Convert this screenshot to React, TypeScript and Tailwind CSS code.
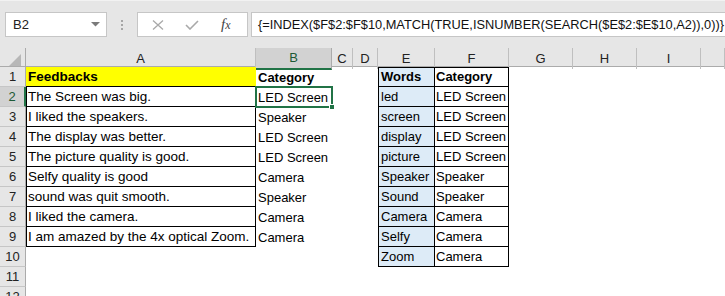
import React from "react";

const COLS = [
  { key: "A", w: 230 },
  { key: "B", w: 76 },
  { key: "C", w: 21 },
  { key: "D", w: 25 },
  { key: "E", w: 57 },
  { key: "F", w: 74 },
  { key: "G", w: 64 },
  { key: "H", w: 64 },
  { key: "I", w: 64 },
  { key: "J", w: 24 },
];

const feedbacks = [
  "The Screen was big.",
  "I liked the speakers.",
  "The display was better.",
  "The picture quality is good.",
  "Selfy quality is good",
  "sound was quit smooth.",
  "I liked the camera.",
  "I am amazed by the 4x optical Zoom.",
];
const results = ["LED Screen", "Speaker", "LED Screen", "LED Screen", "Camera", "Speaker", "Camera", "Camera"];
const words = ["led", "screen", "display", "picture", "Speaker", "Sound", "Camera", "Selfy", "Zoom"];
const wordCats = ["LED Screen", "LED Screen", "LED Screen", "LED Screen", "Speaker", "Speaker", "Camera", "Camera", "Camera"];

const FORMULA = "{=INDEX($F$2:$F$10,MATCH(TRUE,ISNUMBER(SEARCH($E$2:$E$10,A2)),0))}";

function cellText(col: string, row: number): string {
  if (col === "A") return row === 1 ? "Feedbacks" : feedbacks[row - 2] ?? "";
  if (col === "B") return row === 1 ? "Category" : results[row - 2] ?? "";
  if (col === "E") return row === 1 ? "Words" : words[row - 2] ?? "";
  if (col === "F") return row === 1 ? "Category" : wordCats[row - 2] ?? "";
  return "";
}

function Cell({ col, row }: { col: string; row: number }) {
  const text = cellText(col, row);
  let cls = "h-[20px] flex items-end pb-[1px] overflow-hidden whitespace-nowrap";

  if (col === "A") {
    if (row === 1) cls += " bg-[#ffff00] border-b border-black pl-[2px] text-[13.5px]";
    else if (row <= 9) cls += " border-l border-r border-b border-black pl-[1px] text-[13.5px]";
  } else if (col === "B") {
    cls += " pl-[2px]";
  } else if (col === "E" && row <= 10) {
    cls += " bg-[#ddebf7] border-l border-r border-b border-black pl-[2px]";
    if (row === 1) cls += " border-t";
  } else if (col === "F" && row <= 10) {
    cls += " border-r border-b border-black pl-[1px]";
    if (row === 1) cls += " border-t";
  }

  return (
    <div className={cls}>
      <span className={`leading-[16px] ${row === 1 ? "font-bold" : ""}`}>{text}</span>
    </div>
  );
}

export default function App() {
  const rows = Array.from({ length: 12 }, (_, i) => i + 1);

  return (
    <div className="relative w-[725px] h-[296px] overflow-hidden bg-white font-['Liberation_Sans',Arial,sans-serif] text-[13px] text-black">
      {/* Formula bar */}
      <div className="h-[48px] bg-[#e6e6e6] border-t border-[#f2f2f2] flex items-start pt-[11px]">
        <div className="ml-[5px] w-[102px] h-[25px] bg-white border border-[#c6c6c6] flex items-center justify-between pl-[7px] pr-[6px]">
          <span className="text-[#222]">B2</span>
          <svg width="9" height="5" viewBox="0 0 9 5">
            <path d="M0 0 H9 L4.5 4.5 Z" fill="#7a7a7a" />
          </svg>
        </div>
        <div className="w-[30px] h-[25px] flex flex-col items-center justify-center gap-[2px]">
          <span className="w-[2px] h-[2px] bg-[#a6a6a6]" />
          <span className="w-[2px] h-[2px] bg-[#a6a6a6]" />
          <span className="w-[2px] h-[2px] bg-[#a6a6a6]" />
        </div>
        <div className="w-[111px] h-[25px] bg-white border border-[#c6c6c6] flex items-center">
          <svg width="12" height="10" viewBox="0 0 12 10" className="ml-[14px]">
            <path d="M1 0.5 L11 9.5 M11 0.5 L1 9.5" stroke="#a9a9a9" strokeWidth="1.3" />
          </svg>
          <svg width="14" height="10" viewBox="0 0 14 10" className="ml-[21px]">
            <path d="M1 5 L5 9 L13 1" stroke="#a9a9a9" strokeWidth="1.6" fill="none" />
          </svg>
          <span className="ml-[22px] font-['Liberation_Serif',serif] italic text-[15px] text-[#444] leading-none">
            f<span className="text-[12px]">x</span>
          </span>
        </div>
        <div className="ml-[3px] flex-1 h-[25px] bg-white border border-[#c6c6c6] border-r-0 flex items-center pl-[6px]">
          <span className="text-[12.8px] whitespace-nowrap text-[#111]">{FORMULA}</span>
        </div>
      </div>

      {/* Column headers */}
      <div className="grid grid-cols-[26px_230px_76px_21px_25px_57px_74px_64px_64px_64px_24px] h-[19px] bg-[#e6e6e6] border-b border-[#ababab]">
        <div className="border-r border-[#ababab] flex items-end justify-end pr-[4px] pb-[3px]">
          <svg width="12" height="12" viewBox="0 0 12 12">
            <path d="M12 0 V12 H0 Z" fill="#b7b7b7" />
          </svg>
        </div>
        {COLS.map((c) =>
          c.key === "B" ? (
            <div
              key={c.key}
              className="bg-[#d2d2d2] border-r border-[#ababab] border-b-2 border-b-[#217346] -mb-[1px] flex items-center justify-center text-[#1d5a36]"
            >
              {c.key}
            </div>
          ) : (
            <div key={c.key} className="border-r border-[#bfbfbf] flex items-center justify-center text-[#222]">
              {c.key === "J" ? "" : c.key}
            </div>
          )
        )}
      </div>

      {/* Grid body */}
      {rows.map((r) => (
        <div
          key={r}
          className="grid grid-cols-[26px_230px_76px_21px_25px_57px_74px_64px_64px_64px_24px] h-[20px]"
        >
          {r === 2 ? (
            <div className="h-[20px] bg-[#d2d2d2] border-r-2 border-[#217346] border-b border-b-[#c6c6c6] flex items-center justify-center text-[#1d5a36]">
              {r}
            </div>
          ) : (
            <div className="h-[20px] bg-[#e6e6e6] border-r border-[#ababab] border-b border-b-[#c6c6c6] flex items-center justify-center text-[#222]">
              {r}
            </div>
          )}
          {COLS.map((c) => (
            <Cell key={c.key} col={c.key} row={r} />
          ))}
        </div>
      ))}

      {/* Active cell B2 */}
      <div className="absolute left-[255px] top-[86px] w-[78px] h-[22px] border-2 border-[#217346] pointer-events-none" />
      <div className="absolute left-[329px] top-[104px] w-[6px] h-[6px] bg-[#217346] border border-white pointer-events-none" />
    </div>
  );
}
